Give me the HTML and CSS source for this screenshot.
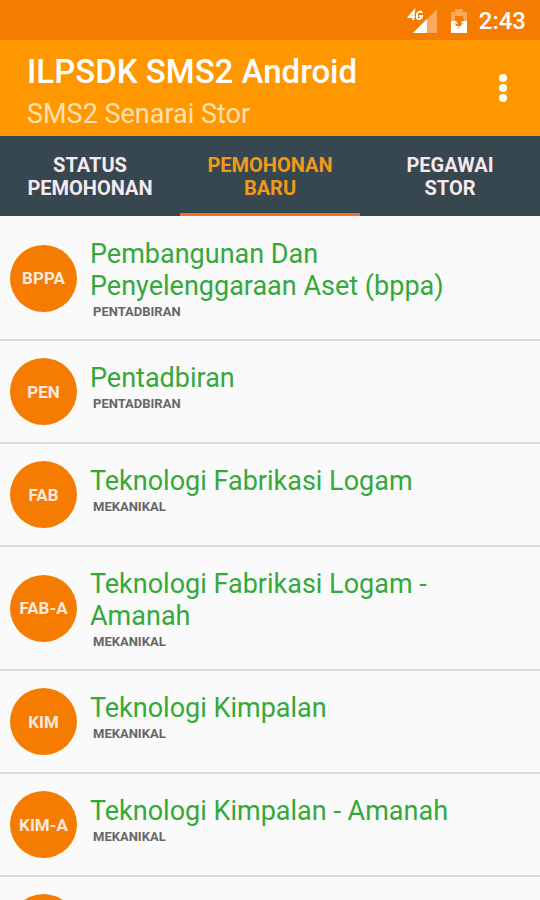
FILE: index.html
```html
<!DOCTYPE html>
<html lang="ms">
<head>
  <meta charset="UTF-8">
  <meta name="viewport" content="width=device-width, initial-scale=1.0">
  <title>ILPSDK SMS2 Android</title>
  <link rel="stylesheet" href="styles.css">
</head>
<body>

  <!-- Status bar -->
  <div class="status-bar">
    <svg class="signal" width="32" height="26" viewBox="0 0 32 26" aria-hidden="true">
      <path d="M30 1v24H6z" fill="#fff" fill-opacity=".35"/>
      <path d="M20 11v14H6z" fill="#fff"/>
      <g fill="none" stroke="#fff" stroke-width="2">
        <path d="M6 12l1-9-5 6h6"/>
        <path d="M15 5c-1-2-4-2-5 1v2c-1 4 4 4 5 1V8h-3"/>
      </g>
    </svg>
    <svg class="battery" width="18" height="26" viewBox="0 0 18 26" aria-hidden="true">
      <path d="M5 1h8v3h4v9h-3l-1-5H5v5H1V4h4z" fill="#fff" fill-opacity=".35"/>
      <path d="M1 13h5l2 3 5-3h4v12H1z" fill="#fff"/>
      <path d="M12 11l-5 5-2-1 1 3h3l-2 4 6-7h-2z" fill="#f57c00"/>
    </svg>
    <span class="clock">2:43</span>
  </div>

  <!-- App bar -->
  <header class="app-bar">
    <div>
      <h1>ILPSDK SMS2 Android</h1>
      <p>SMS2 Senarai Stor</p>
    </div>
    <button class="menu-btn" type="button" aria-label="Menu">
      <svg width="8" height="28" viewBox="0 0 8 28" fill="#fff">
        <circle cx="4" cy="4" r="4"/>
        <circle cx="4" cy="14" r="4"/>
        <circle cx="4" cy="24" r="4"/>
      </svg>
    </button>
  </header>

  <!-- Tabs -->
  <nav class="tabs">
    <button class="tab" type="button">STATUS PEMOHONAN</button>
    <button class="tab active" type="button">PEMOHONAN BARU</button>
    <button class="tab" type="button">PEGAWAI STOR</button>
  </nav>

  <!-- Senarai stor -->
  <ul class="list">
    <li class="item">
      <span class="avatar">BPPA</span>
      <div class="text">
        <h2>Pembangunan Dan Penyelenggaraan Aset (bppa)</h2>
        <p>PENTADBIRAN</p>
      </div>
    </li>
    <li class="item">
      <span class="avatar">PEN</span>
      <div class="text">
        <h2>Pentadbiran</h2>
        <p>PENTADBIRAN</p>
      </div>
    </li>
    <li class="item">
      <span class="avatar">FAB</span>
      <div class="text">
        <h2>Teknologi Fabrikasi Logam</h2>
        <p>MEKANIKAL</p>
      </div>
    </li>
    <li class="item">
      <span class="avatar">FAB-A</span>
      <div class="text">
        <h2>Teknologi Fabrikasi Logam - Amanah</h2>
        <p>MEKANIKAL</p>
      </div>
    </li>
    <li class="item">
      <span class="avatar">KIM</span>
      <div class="text">
        <h2>Teknologi Kimpalan</h2>
        <p>MEKANIKAL</p>
      </div>
    </li>
    <li class="item">
      <span class="avatar">KIM-A</span>
      <div class="text">
        <h2>Teknologi Kimpalan - Amanah</h2>
        <p>MEKANIKAL</p>
      </div>
    </li>
    <li class="item">
      <span class="avatar"></span>
    </li>
  </ul>

</body>
</html>
```

FILE: styles.css
```css
* {
  box-sizing: border-box;
}

body {
  display: flex;
  flex-direction: column;
  height: 100vh;
  margin: 0;
  background-color: #fafafa;
  font-family: Roboto, "Liberation Sans", sans-serif;
  overflow: hidden;
}

h1, h2, p, ul {
  margin: 0;
  padding: 0;
}

button {
  border: none;
  background: none;
  font-family: inherit;
  cursor: pointer;
}

/* Status bar */
.status-bar {
  display: flex;
  flex-shrink: 0;
  align-items: center;
  justify-content: flex-end;
  gap: 11px;
  height: 40px;
  padding: 2px 14px 0 0;
  background-color: #f57c00;
}
.clock {
  color: #fff;
  font-size: 24px;
  font-weight: 500;
}

/* App bar */
.app-bar {
  display: flex;
  flex-shrink: 0;
  align-items: center;
  justify-content: space-between;
  padding: 12px 25px 4px 27px;
  background-color: #ff9800;
}
.app-bar h1 {
  color: #fff;
  font-size: 33px;
  font-weight: 500;
  line-height: 40px;
}
.app-bar p {
  padding-top: 4px;
  color: #ffe0b2;
  font-size: 27px;
  line-height: 36px;
}
.menu-btn {
  display: flex;
  padding: 4px 8px 12px;
}

/* Tabs */
.tabs {
  display: grid;
  flex-shrink: 0;
  grid-template-columns: repeat(3, 1fr);
  background-color: #37474f;
}
.tab {
  height: 80px;
  padding: 4px 24px 0;
  border-bottom: 3px solid transparent;
  color: #f5e9ee;
  font-size: 20px;
  font-weight: 700;
  line-height: 23px;
}
.tab.active {
  border-bottom-color: #f0702a;
  color: #f09a1a;
}

/* Senarai */
.list {
  flex: 1;
  padding-top: 1px;
  list-style: none;
  overflow: hidden;
}
.item {
  display: flex;
  align-items: center;
  gap: 13px;
  padding: 17px 60px 17px 10px;
  border-bottom: 2px solid #dcdcdc;
}
.avatar {
  display: flex;
  flex-shrink: 0;
  align-items: center;
  justify-content: center;
  width: 67px;
  height: 67px;
  border-radius: 50%;
  background-color: #f57c00;
  color: #fce9e0;
  font-size: 17px;
  font-weight: 700;
}
.text {
  align-self: flex-start;
  padding-top: 4px;
}
.text h2 {
  color: #35a83a;
  font-size: 27px;
  font-weight: 400;
  line-height: 32px;
}
.text p {
  padding-left: 3px;
  color: #666;
  font-size: 13px;
  font-weight: 700;
  line-height: 20px;
}
```
